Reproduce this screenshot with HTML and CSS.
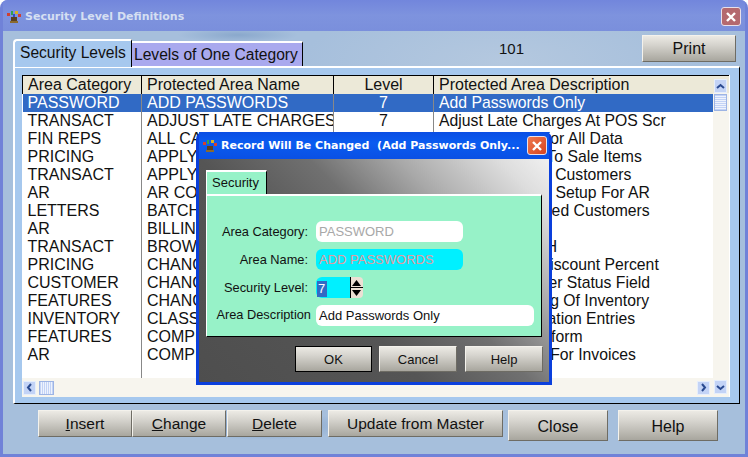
FILE: index.html
```html
<!DOCTYPE html>
<html lang="en">
<head>
  <meta charset="UTF-8">
  <title>Security Level Definitions</title>
  <link rel="stylesheet" href="styles.css">
</head>
<body>
  <div class="window">
    <!-- Title Bar -->
    <div class="titlebar">
      <svg class="app-icon" width="16" height="14" viewBox="0 0 16 14">
        <rect x="5" y="7" width="6" height="5" fill="#5a4020"/>
        <rect x="4" y="11" width="8" height="2" fill="#8a6a30"/>
        <rect x="1" y="3" width="3" height="3" fill="#d04030"/>
        <rect x="5" y="1" width="2" height="4" fill="#30a050"/>
        <rect x="9" y="1" width="3" height="3" fill="#d8b020"/>
        <rect x="12" y="4" width="3" height="3" fill="#d04030"/>
        <rect x="7" y="4" width="2" height="3" fill="#3050c0"/>
      </svg>
      <span class="title-text">Security Level Definitions</span>
      <button class="close-x inactive">
        <svg width="12" height="12" viewBox="0 0 12 12"><path d="M2 2L10 10M10 2L2 10" stroke="#fff" stroke-width="2.4"/></svg>
      </button>
    </div>

    <div class="client">
      <!-- Tabs and Print -->
      <div class="top-row">
        <div class="tab active-tab">Security Levels</div>
        <div class="tab other-tab">Levels of One Category</div>
        <span class="count">101</span>
        <button class="btn print-btn">Print</button>
      </div>

      <!-- Tab Panel -->
      <div class="panel">
        <div class="list">
          <div class="table-wrap">
            <table class="grid">
              <colgroup>
                <col class="col-cat"><col class="col-name"><col class="col-level"><col class="col-desc">
              </colgroup>
              <thead>
                <tr><th>Area Category</th><th>Protected Area Name</th><th class="center">Level</th><th>Protected Area Description</th></tr>
              </thead>
              <tbody>
                <tr class="selected"><td>PASSWORD</td><td>ADD PASSWORDS</td><td class="center">7</td><td class="desc">Add Passwords Only</td></tr>
                <tr><td>TRANSACT</td><td>ADJUST LATE CHARGES</td><td class="center">7</td><td class="desc">Adjust Late Charges At POS Scr</td></tr>
                <tr><td>FIN REPS</td><td>ALL CATEGORIES</td><td></td><td class="desc">Audit Security For All Data</td></tr>
                <tr><td>PRICING</td><td>APPLY DISCOUNTS</td><td></td><td class="desc">Apply Specials To Sale Items</td></tr>
                <tr><td>TRANSACT</td><td>APPLY CREDIT</td><td></td><td class="desc">Apply Return To Customers</td></tr>
                <tr><td>AR</td><td>AR COUNTER</td><td></td><td class="desc">AR Counter File Setup For AR</td></tr>
                <tr><td>LETTERS</td><td>BATCH LETTERS</td><td></td><td class="desc">Notices To Filtered Customers</td></tr>
                <tr><td>AR</td><td>BILLING</td><td></td><td class="desc">Billing Cycle</td></tr>
                <tr><td>TRANSACT</td><td>BROWSE</td><td></td><td class="desc">Browse In CASH</td></tr>
                <tr><td>PRICING</td><td>CHANGE DISCOUNT</td><td></td><td class="desc">Change Base Discount Percent</td></tr>
                <tr><td>CUSTOMER</td><td>CHANGE STATUS</td><td></td><td class="desc">Update Customer Status Field</td></tr>
                <tr><td>FEATURES</td><td>CHANGE GROUPING</td><td></td><td class="desc">Update Grouping Of Inventory</td></tr>
                <tr><td>INVENTORY</td><td>CLASSIFICATION</td><td></td><td class="desc">Delete Classification Entries</td></tr>
                <tr><td>FEATURES</td><td>COMPLETE ORDER</td><td></td><td class="desc">Combine Order form</td></tr>
                <tr><td>AR</td><td>COMPLETE INVOICE</td><td></td><td class="desc">Company Logo For Invoices</td></tr>
                <tr class="filler"><td></td><td></td><td></td><td></td></tr>
              </tbody>
            </table>
          </div>

          <!-- Vertical Scrollbar -->
          <div class="vscroll">
            <div class="sb-btn sb-up">
              <svg width="9" height="7" viewBox="0 0 9 7"><path d="M1 5L4.5 2L8 5" fill="none" stroke="#2a4a90" stroke-width="2"/></svg>
            </div>
            <div class="sb-thumb sb-thumb-v"></div>
            <div class="sb-btn sb-down">
              <svg width="9" height="7" viewBox="0 0 9 7"><path d="M1 2L4.5 5L8 2" fill="none" stroke="#2a4a90" stroke-width="2"/></svg>
            </div>
          </div>

          <!-- Horizontal Scrollbar -->
          <div class="hscroll">
            <div class="sb-btn">
              <svg width="7" height="9" viewBox="0 0 7 9"><path d="M5 1L2 4.5L5 8" fill="none" stroke="#2a4a90" stroke-width="2"/></svg>
            </div>
            <div class="sb-thumb sb-thumb-h"></div>
            <div class="sb-btn sb-right">
              <svg width="7" height="9" viewBox="0 0 7 9"><path d="M2 1L5 4.5L2 8" fill="none" stroke="#2a4a90" stroke-width="2"/></svg>
            </div>
          </div>
        </div>
      </div>

      <!-- Bottom Buttons -->
      <div class="bottom-row">
        <button class="btn b-short b-insert"><u>I</u>nsert</button>
        <button class="btn b-short b-change"><u>C</u>hange</button>
        <button class="btn b-short b-delete"><u>D</u>elete</button>
        <button class="btn b-short b-update">Update from Master</button>
        <button class="btn b-tall">Close</button>
        <button class="btn b-tall">Help</button>
      </div>
    </div>

    <!-- Modal Dialog -->
    <div class="dialog">
      <div class="dialog-title">
        <svg class="app-icon" width="16" height="14" viewBox="0 0 16 14">
          <rect x="5" y="7" width="6" height="5" fill="#5a4020"/>
          <rect x="4" y="11" width="8" height="2" fill="#8a6a30"/>
          <rect x="1" y="3" width="3" height="3" fill="#d04030"/>
          <rect x="5" y="1" width="2" height="4" fill="#30a050"/>
          <rect x="9" y="1" width="3" height="3" fill="#d8b020"/>
          <rect x="12" y="4" width="3" height="3" fill="#d04030"/>
        </svg>
        <span class="dialog-title-text">Record Will Be Changed &nbsp;(Add Passwords Only...</span>
        <button class="close-x active">
          <svg width="12" height="12" viewBox="0 0 12 12"><path d="M2 2L10 10M10 2L2 10" stroke="#fff" stroke-width="2.4"/></svg>
        </button>
      </div>
      <div class="dialog-body">
        <div class="dialog-tab">Security</div>
        <div class="dialog-panel">
          <label class="field-label">Area Category:</label>
          <div class="field f-disabled">PASSWORD</div>
          <label class="field-label">Area Name:</label>
          <div class="field f-cyan">ADD PASSWORDS</div>
          <label class="field-label">Security Level:</label>
          <div class="spin">
            <div class="field f-level"><span class="sel">7</span></div>
            <div class="spin-btns">
              <svg width="13" height="21" viewBox="0 0 13 21">
                <rect x="0" y="0" width="1" height="21" fill="#000"/>
                <path d="M6.5 3L11 9H2Z" fill="#000"/>
                <rect x="0" y="10" width="13" height="1" fill="#000"/>
                <path d="M2 13H11L6.5 19Z" fill="#000"/>
              </svg>
            </div>
          </div>
          <label class="field-label wide">Area Description</label>
          <div class="field f-desc">Add Passwords Only</div>
        </div>
        <div class="dialog-buttons">
          <button class="btn dlg-btn default-btn">OK</button>
          <button class="btn dlg-btn">Cancel</button>
          <button class="btn dlg-btn">Help</button>
        </div>
      </div>
    </div>
  </div>
</body>
</html>
```

FILE: styles.css
```css
body {
  margin: 0;
  font-family: 'Liberation Sans', Arial, sans-serif;
  color: #111;
}

/* Main Window */
.window {
  position: relative;
  width: 748px;
  height: 457px;
  box-sizing: border-box;
  overflow: hidden;
  display: flex;
  flex-direction: column;
  background-color: #7082d8;
  border-radius: 8px 8px 0 0;
  padding: 0 3px 3px;
}

.titlebar {
  height: 31px;
  flex: none;
  display: flex;
  align-items: center;
  padding: 2px 4px 0 3px;
  box-sizing: border-box;
  background: linear-gradient(#7286dc, #7e93de 50%, #7a8fdc);
}

.app-icon {
  flex: none;
  margin-right: 3px;
}

.title-text {
  font-family: 'DejaVu Sans', sans-serif;
  font-size: 11px;
  font-weight: bold;
  color: #d5dff2;
}

.close-x {
  margin-left: auto;
  width: 20px;
  height: 19px;
  padding: 0;
  border: 1px solid #e8e0ea;
  border-radius: 3px;
  display: flex;
  align-items: center;
  justify-content: center;
}

.close-x.inactive {
  background-color: #b4696f;
}

.close-x.active {
  background: linear-gradient(135deg, #ee7a50, #d8431f);
}

/* Client Area */
.client {
  flex: 1;
  min-height: 0;
  padding-left: 10px;
  background:
    radial-gradient(ellipse 60px 8px at 235px 4px, #8aa8cc, transparent),
    radial-gradient(ellipse 90px 14px at 260px 395px, #7f9fc8, transparent),
    radial-gradient(ellipse 200px 60px at 500px 30px, #b4c8df, transparent),
    #a6bfdc;
}

.top-row {
  height: 35px;
  display: flex;
  align-items: flex-end;
  position: relative;
}

.tab {
  font-size: 15.6px;
  box-sizing: border-box;
  white-space: nowrap;
}

.active-tab {
  width: 119px;
  height: 28px;
  padding: 3px 0 0 5px;
  background-color: #a6c8ee;
  border-top: 2px solid #fff;
  border-left: 2px solid #fff;
  border-radius: 4px 0 0 0;
  border-right: 1px solid #000;
  margin-bottom: -1px;
  z-index: 1;
}

.other-tab {
  width: 171px;
  height: 25px;
  padding: 3px 0 0 2px;
  background-color: #a9a9ee;
  border-top: 2px solid #fff;
  border-right: 1px solid #000;
}

.count {
  margin-left: 196px;
  margin-bottom: 9px;
  font-size: 15px;
}

.print-btn {
  width: 94px;
  height: 27px;
  margin-left: 118px;
  align-self: flex-start;
  margin-top: 4px;
}

/* Buttons */
.btn {
  font-family: 'Liberation Sans', Arial, sans-serif;
  font-size: 16px;
  color: #111;
  padding: 0;
  box-sizing: border-box;
  background: linear-gradient(#eceae4, #d6d4ce 35%, #a8a69e);
  border: 1px solid;
  border-color: #f4f2ec #6e6c64 #6e6c64 #f4f2ec;
}

/* Tab Panel */
.panel {
  width: 727px;
  height: 338px;
  box-sizing: border-box;
  background-color: #a6c8ee;
  border-top: 2px solid #fff;
  border-left: 2px solid #fff;
  border-right: 1px solid #000;
  border-bottom: 1px solid #000;
  padding: 7px 9px 6px 7px;
}

.list {
  height: 100%;
  display: grid;
  grid-template-columns: 691px 16px;
  grid-template-rows: 1fr 19px;
  background-color: #fff;
}

.table-wrap {
  overflow: hidden;
  background-color: #fff;
}

.grid {
  border-collapse: collapse;
  table-layout: fixed;
  width: 691px;
  font-size: 16px;
}

.col-cat { width: 119px; }
.col-name { width: 192px; }
.col-level { width: 100px; }
.col-desc { width: 280px; }

.grid th {
  height: 18px;
  padding: 0 0 0 5px;
  box-sizing: border-box;
  font-weight: normal;
  text-align: left;
  background-color: #ece9d8;
  border-top: 1px solid #000;
  border-left: 1px solid #000;
  white-space: nowrap;
  overflow: hidden;
}

.grid td {
  height: 18px;
  padding: 0 0 0 5px;
  box-sizing: border-box;
  border-left: 1px solid #888;
  white-space: nowrap;
  overflow: hidden;
}

.grid td:first-child {
  border-left: none;
}

.grid .center {
  text-align: center;
  padding-left: 0;
}

.grid .desc {
  font-size: 15.75px;
}

.selected td {
  background-color: #316ac5;
  color: #fff;
}

.grid .filler td {
  height: 15px;
}

/* Scrollbars */
.vscroll {
  grid-row: 1 / 3;
  grid-column: 2;
  box-sizing: border-box;
  border-top: 1px solid #000;
  padding: 3px 2px 3px 1px;
  display: flex;
  flex-direction: column;
  background: linear-gradient(#ece9d8 17px, #f7f5ee 17px);
}

.hscroll {
  grid-row: 2;
  grid-column: 1;
  display: flex;
  align-items: center;
  padding: 0 2px 0 1px;
  background-color: #f7f5ee;
}

.sb-btn {
  width: 13px;
  height: 14px;
  flex: none;
  display: flex;
  align-items: center;
  justify-content: center;
  background-color: #c3d3f6;
  border: 1px solid #e6eefc;
  box-sizing: border-box;
}

.sb-thumb {
  flex: none;
  box-sizing: border-box;
  background-color: #c3d3f6;
  border: 1px solid #9db4e4;
}

.sb-thumb-v {
  width: 13px;
  height: 17px;
  margin-top: 1px;
  background: repeating-linear-gradient(#c3d3f6 0 1px, #eef3fd 1px 2px);
}

.sb-thumb-h {
  width: 15px;
  height: 14px;
  margin-left: 3px;
  background: repeating-linear-gradient(90deg, #c3d3f6 0 1px, #eef3fd 1px 2px);
}

.sb-down {
  margin-top: auto;
}

.sb-right {
  margin-left: auto;
  margin-right: 1px;
}

/* Bottom Buttons */
.bottom-row {
  display: flex;
  align-items: flex-start;
  padding: 6px 0 0 25px;
}

.b-short {
  height: 27px;
  font-size: 15.5px;
}

.b-insert { width: 94px; }
.b-change { width: 94px; }
.b-delete { width: 95px; margin-left: 1px; }
.b-update { width: 175px; margin-left: 6px; }

.b-tall {
  width: 100px;
  height: 31px;
  margin-left: 5px;
  padding-top: 3px;
}

.b-tall + .b-tall {
  margin-left: 10px;
}

/* Modal Dialog */
.dialog {
  position: absolute;
  left: 196px;
  top: 132px;
  width: 356px;
  height: 253px;
  box-sizing: border-box;
  display: flex;
  flex-direction: column;
  background-color: #0a3fdc;
  border-radius: 7px 7px 0 0;
  padding: 0 3px 3px;
}

.dialog-title {
  height: 27px;
  flex: none;
  display: flex;
  align-items: center;
  padding: 0 2px 0 3px;
  box-sizing: border-box;
  background: linear-gradient(#0a4ee4, #0a5cf0 40%, #0a50e4);
}

.dialog-title-text {
  font-family: 'DejaVu Sans', sans-serif;
  font-size: 11px;
  font-weight: bold;
  color: #fff;
  white-space: pre;
}

.dialog-body {
  flex: 1;
  min-height: 0;
  padding: 11px 0 0 7px;
  background: linear-gradient(45deg, #4e4e4e, #555 39%, #707070 58%, #aaa 74%, #ddd 91%, #f0f0f0);
}

.dialog-tab {
  width: 61px;
  height: 25px;
  box-sizing: border-box;
  padding: 3px 0 0 5px;
  font-size: 13px;
  background-color: #97f2c8;
  border-top: 2px solid #fff;
  border-left: 1px solid #fff;
  border-right: 1px solid #000;
}

.dialog-panel {
  width: 336px;
  height: 143px;
  margin-top: -1px;
  box-sizing: border-box;
  background-color: #97f2c8;
  border-top: 2px solid #fff;
  border-left: 1px solid #fff;
  border-right: 1px solid #000;
  border-bottom: 1px solid #000;
  padding-top: 25px;
  display: grid;
  grid-template-columns: 109px 218px;
  grid-auto-rows: 21px;
  row-gap: 7px;
}

.field-label {
  font-size: 12.8px;
  line-height: 21px;
  text-align: right;
  padding-right: 8px;
  white-space: nowrap;
}

.field-label.wide {
  padding-right: 5px;
  line-height: 19px;
}

.field {
  font-size: 13px;
  line-height: 21px;
  padding-left: 3px;
  border-radius: 6px;
  box-sizing: border-box;
  white-space: nowrap;
}

.f-disabled {
  width: 147px;
  background-color: #fff;
  color: #a8a8a8;
}

.f-cyan {
  width: 147px;
  background-color: #00f0ff;
  color: #e49aa0;
}

.f-desc {
  background-color: #fff;
}

.spin {
  display: flex;
}

.f-level {
  width: 34px;
  background-color: #00f0ff;
  border-radius: 6px 0 0 6px;
  padding-left: 1px;
}

.sel {
  display: inline-block;
  width: 9px;
  height: 16px;
  line-height: 16px;
  padding-left: 1px;
  vertical-align: middle;
  background-color: #316ac5;
  color: #fff;
}

.spin-btns {
  width: 13px;
  height: 21px;
  background-color: #ece0d4;
  border-radius: 0 4px 4px 0;
}

.dialog-buttons {
  display: flex;
  justify-content: flex-end;
  gap: 7px;
  padding: 9px 6px 0 0;
}

.dlg-btn {
  width: 78px;
  height: 26px;
  font-size: 13px;
}

.default-btn {
  width: 77px;
  border: 1px solid #000;
}

.default-btn + .dlg-btn + .dlg-btn {
  margin-left: 1px;
}
```
